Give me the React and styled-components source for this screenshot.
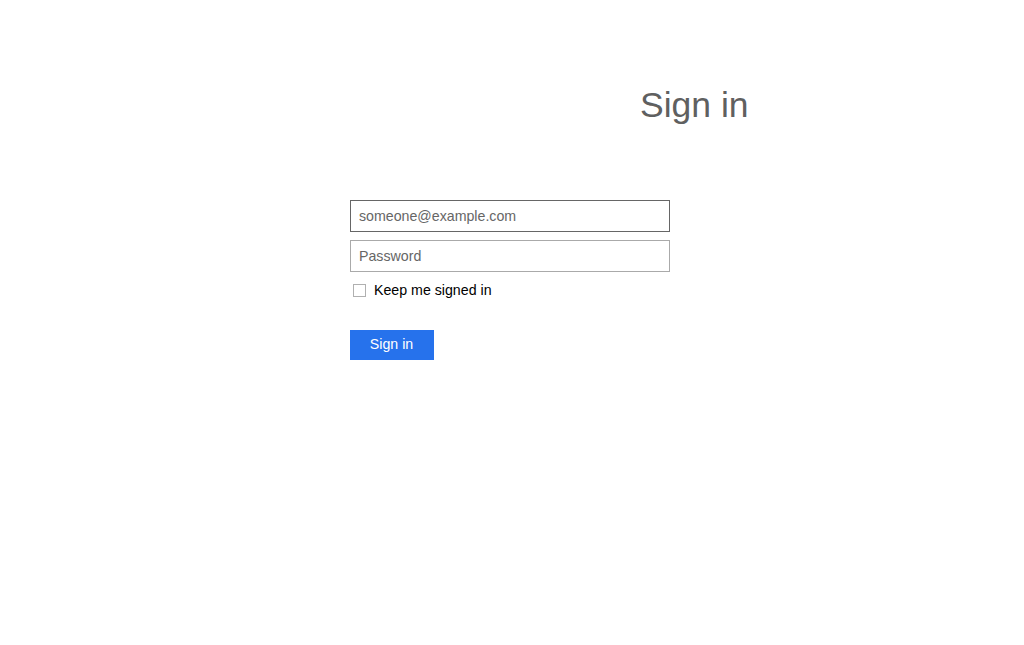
import React from 'react'
import styled, { createGlobalStyle } from 'styled-components'

const GlobalStyle = createGlobalStyle`
  html, body {
    margin: 0;
    padding: 0;
    background: #fff;
  }
  body {
    font-family: "Liberation Sans", Arial, sans-serif;
    font-size: 14.2px;
    color: #000;
  }
`

const Page = styled.div`
  width: 1024px;
  min-height: 645px;
  display: flex;
  flex-direction: column;
`

const Header = styled.div`
  padding: 85px 0 0 640px;
  height: 200px;
  box-sizing: border-box;
`

const Title = styled.h1`
  margin: 0;
  font-size: 35.5px;
  font-weight: normal;
  line-height: 40px;
  color: #5f6060;
`

const Form = styled.form`
  margin-left: 350px;
  width: 320px;
  display: flex;
  flex-direction: column;
  gap: 8px;
`

const Input = styled.input`
  box-sizing: border-box;
  width: 320px;
  height: 32px;
  padding: 0 8px;
  margin: 0;
  border: 1px solid ${({ $active }) => ($active ? '#666' : '#aaa')};
  border-radius: 0;
  outline: none;
  font-family: inherit;
  font-size: 14.2px;
  color: #000;
  background: #fff;

  &::placeholder {
    color: #666;
    opacity: 1;
  }
`

const CheckRow = styled.label`
  display: flex;
  align-items: center;
  gap: 8px;
  padding-left: 3px;
  height: 20px;
  cursor: pointer;
`

const Box = styled.span`
  box-sizing: border-box;
  width: 13px;
  height: 13px;
  border: 1px solid #b0b0b0;
  background: #fff;
`

const Submit = styled.button`
  margin-top: 22px;
  align-self: flex-start;
  box-sizing: border-box;
  width: 84px;
  height: 30px;
  padding: 0 1px 2px 0;
  border: none;
  border-radius: 0;
  background: #2672ec;
  color: #fff;
  font-family: inherit;
  font-size: 14.2px;
  cursor: pointer;
`

export default function App() {
  return (
    <Page>
      <GlobalStyle />
      <Header>
        <Title>Sign in</Title>
      </Header>
      <Form onSubmit={e => e.preventDefault()}>
        <Input $active type='email' placeholder='someone@example.com' />
        <Input type='password' placeholder='Password' />
        <CheckRow>
          <Box />
          Keep me signed in
        </CheckRow>
        <Submit type='submit'>Sign in</Submit>
      </Form>
    </Page>
  )
}
